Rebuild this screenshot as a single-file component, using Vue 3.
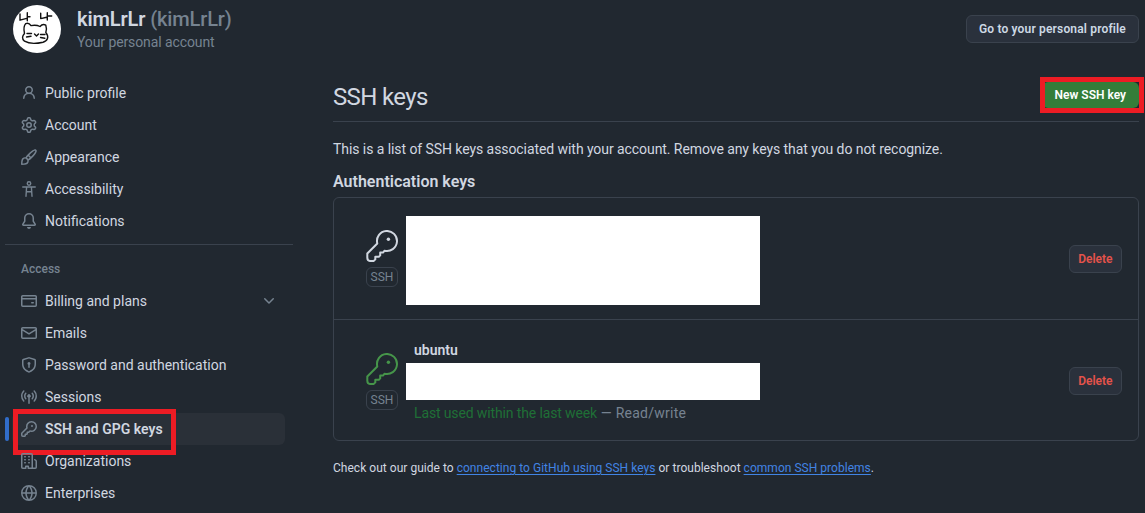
<script setup>
const icons = {
  person: 'M10.561 8.073a6.005 6.005 0 0 1 3.432 5.142.75.75 0 1 1-1.498.07 4.5 4.5 0 0 0-8.99 0 .75.75 0 1 1-1.498-.07 6.004 6.004 0 0 1 3.431-5.142 3.999 3.999 0 1 1 5.123 0ZM10.5 5a2.5 2.5 0 1 0-5 0 2.5 2.5 0 0 0 5 0Z',
  gear: 'M8 0a8.2 8.2 0 0 1 .701.031C9.444.095 9.99.645 10.16 1.29l.288 1.107c.018.066.079.158.212.224.231.114.454.243.668.386.123.082.233.09.299.071l1.103-.303c.644-.176 1.392.021 1.82.63.27.385.506.792.704 1.218.315.675.111 1.422-.364 1.891l-.814.806c-.049.048-.098.147-.088.294.016.257.016.515 0 .772-.01.147.038.246.088.294l.814.806c.475.469.679 1.216.364 1.891a7.977 7.977 0 0 1-.704 1.217c-.428.61-1.176.807-1.82.63l-1.102-.302c-.067-.019-.177-.011-.3.071a5.909 5.909 0 0 1-.668.386c-.133.066-.194.158-.211.224l-.29 1.106c-.168.646-.715 1.196-1.458 1.26a8.006 8.006 0 0 1-1.402 0c-.743-.064-1.289-.614-1.458-1.26l-.289-1.106c-.018-.066-.079-.158-.212-.224a5.738 5.738 0 0 1-.668-.386c-.123-.082-.233-.09-.299-.071l-1.103.303c-.644.176-1.392-.021-1.82-.63a8.12 8.12 0 0 1-.704-1.218c-.315-.675-.111-1.422.363-1.891l.815-.806c.05-.048.098-.147.088-.294a6.214 6.214 0 0 1 0-.772c.01-.147-.038-.246-.088-.294l-.815-.806C.635 6.045.431 5.298.746 4.623a7.92 7.92 0 0 1 .704-1.217c.428-.61 1.176-.807 1.82-.63l1.102.302c.067.019.177.011.3-.071.214-.143.437-.272.668-.386.133-.066.194-.158.211-.224l.29-1.106C6.009.645 6.556.095 7.299.03 7.53.01 7.764 0 8 0Zm-.571 1.525c-.036.003-.108.036-.137.146l-.289 1.105c-.147.561-.549.967-.998 1.189-.173.086-.34.183-.5.29-.417.278-.97.423-1.529.27l-1.103-.303c-.109-.03-.175.016-.195.045-.22.312-.412.644-.573.99-.014.031-.021.11.059.19l.815.806c.411.406.562.957.53 1.456a4.709 4.709 0 0 0 0 .582c.032.499-.119 1.05-.53 1.456l-.815.806c-.081.08-.073.159-.059.19.162.346.353.677.573.989.02.03.085.076.195.046l1.102-.303c.56-.153 1.113-.008 1.53.27.161.107.328.204.501.29.447.222.85.629.997 1.189l.289 1.105c.029.109.101.143.137.146a6.6 6.6 0 0 0 1.142 0c.036-.003.108-.036.137-.146l.289-1.105c.147-.561.549-.967.998-1.189.173-.086.34-.183.5-.29.417-.278.97-.423 1.529-.27l1.103.303c.109.029.175-.016.195-.045.22-.313.411-.644.573-.99.014-.031.021-.11-.059-.19l-.815-.806c-.411-.406-.562-.957-.53-1.456a4.709 4.709 0 0 0 0-.582c-.032-.499.119-1.05.53-1.456l.815-.806c.081-.08.073-.159.059-.19a6.464 6.464 0 0 0-.573-.989c-.02-.03-.085-.076-.195-.046l-1.102.303c-.56.153-1.113.008-1.53-.27a4.44 4.44 0 0 0-.501-.29c-.447-.222-.85-.629-.997-1.189l-.289-1.105c-.029-.11-.101-.143-.137-.146a6.6 6.6 0 0 0-1.142 0ZM11 8a3 3 0 1 1-6 0 3 3 0 0 1 6 0ZM9.5 8a1.5 1.5 0 1 0-3.001.001A1.5 1.5 0 0 0 9.5 8Z',
  brush: 'M11.134 1.535c.7-.509 1.416-.942 2.076-1.155.649-.21 1.463-.267 2.069.34.603.601.568 1.411.368 2.07-.202.668-.624 1.39-1.125 2.096-1.011 1.424-2.496 2.987-3.775 4.249-1.098 1.084-2.132 1.839-3.04 2.3a3.744 3.744 0 0 1-1.055 3.217c-.431.431-1.065.691-1.657.861-.614.177-1.294.287-1.914.357A21.151 21.151 0 0 1 .797 16H.743l.007-.75H.749L.742 16a.75.75 0 0 1-.743-.742l.748-.008-.749.007v-.054a21.25 21.25 0 0 1 .13-2.284c.067-.647.187-1.287.358-1.914.17-.591.43-1.226.86-1.657a3.746 3.746 0 0 1 3.227-1.054c.466-.893 1.225-1.907 2.314-2.982 1.271-1.255 2.833-2.75 4.245-3.777ZM1.62 13.089c-.051.464-.086.929-.104 1.395.466-.018.932-.053 1.396-.104a10.511 10.511 0 0 0 1.668-.309c.526-.151.856-.325 1.011-.48a2.25 2.25 0 1 0-3.182-3.182c-.155.155-.329.485-.48 1.01a10.515 10.515 0 0 0-.309 1.67Zm10.396-10.34c-1.224.89-2.605 2.189-3.822 3.384l1.718 1.718c1.21-1.205 2.51-2.597 3.387-3.833.47-.662.78-1.227.912-1.662.134-.444.032-.551.009-.575h-.001V1.78c-.014-.014-.113-.113-.548.027-.432.14-.995.462-1.655.942Zm-4.832 7.266-.001.001a9.859 9.859 0 0 0 1.63-1.142L7.155 7.216a9.7 9.7 0 0 0-1.161 1.607c.482.302.889.71 1.19 1.192Z',
  figure: 'M9.75 2.5a1.75 1.75 0 1 1-3.5 0 1.75 1.75 0 0 1 3.5 0ZM1.75 6H14.25M5.6 6 5 15.2M10.4 6 11 15.2M5.3 10.8H10.7',
  bell: 'M8 16a2 2 0 0 0 1.985-1.75c.017-.137-.097-.25-.235-.25h-3.5c-.138 0-.252.113-.235.25A2 2 0 0 0 8 16ZM3 5a5 5 0 0 1 10 0v2.947c0 .05.015.098.042.139l1.703 2.555A1.519 1.519 0 0 1 13.482 13H2.518a1.516 1.516 0 0 1-1.263-2.36l1.703-2.554A.255.255 0 0 0 3 7.947Zm5-3.5A3.5 3.5 0 0 0 4.5 5v2.947c0 .346-.102.683-.294.97l-1.703 2.556a.017.017 0 0 0-.003.01l.001.006c0 .002.002.004.004.006l.006.004.007.001h10.964l.007-.001.006-.004.004-.006.001-.007a.017.017 0 0 0-.003-.01l-1.703-2.554a1.745 1.745 0 0 1-.294-.97V5A3.5 3.5 0 0 0 8 1.5Z',
  card: 'M10.75 9a.75.75 0 0 0 0 1.5h1.5a.75.75 0 0 0 0-1.5h-1.5ZM0 3.75C0 2.784.784 2 1.75 2h12.5c.966 0 1.75.784 1.75 1.75v8.5A1.75 1.75 0 0 1 14.25 14H1.75A1.75 1.75 0 0 1 0 12.25ZM14.5 6.5h-13v5.75c0 .138.112.25.25.25h12.5a.25.25 0 0 0 .25-.25Zm0-2.75a.25.25 0 0 0-.25-.25H1.75a.25.25 0 0 0-.25.25V5h13Z',
  mail: 'M1.75 2h12.5c.966 0 1.75.784 1.75 1.75v8.5A1.75 1.75 0 0 1 14.25 14H1.75A1.75 1.75 0 0 1 0 12.25v-8.5C0 2.784.784 2 1.75 2ZM1.5 12.251c0 .138.112.25.25.25h12.5a.25.25 0 0 0 .25-.25V5.809L8.38 9.397a.75.75 0 0 1-.76 0L1.5 5.809v6.442Zm13-8.181v-.32a.25.25 0 0 0-.25-.25H1.75a.25.25 0 0 0-.25.25v.32L8 7.88Z',
  shield: 'm8.533.133 5.25 1.68A1.75 1.75 0 0 1 15 3.48V7c0 1.566-.32 3.182-1.303 4.682-.983 1.498-2.585 2.813-5.032 3.855a1.697 1.697 0 0 1-1.33 0c-2.447-1.042-4.049-2.357-5.032-3.855C1.32 10.182 1 8.566 1 7V3.48a1.75 1.75 0 0 1 1.217-1.667l5.25-1.68a1.748 1.748 0 0 1 1.066 0Zm-.61 1.429.001.001-5.25 1.68a.251.251 0 0 0-.174.237V7c0 1.36.275 2.666 1.057 3.859.784 1.194 2.121 2.342 4.366 3.298a.196.196 0 0 0 .154 0c2.245-.957 3.582-2.103 4.366-3.297C13.225 9.666 13.5 8.358 13.5 7V3.48a.25.25 0 0 0-.174-.238l-5.25-1.68a.25.25 0 0 0-.153 0ZM9.5 6.5c0 .536-.286 1.032-.75 1.3v2.45a.75.75 0 0 1-1.5 0V7.8A1.5 1.5 0 1 1 9.5 6.5Z',
  broadcast: 'M8.75 8.582v5.668a.75.75 0 0 1-1.5 0V8.582a1.75 1.75 0 1 1 1.5 0Zm3.983-7.125a.75.75 0 0 1 1.06.026A7.976 7.976 0 0 1 16 7c0 2.139-.84 4.083-2.207 5.517a.75.75 0 1 1-1.086-1.034A6.474 6.474 0 0 0 14.5 7a6.474 6.474 0 0 0-1.793-4.483.75.75 0 0 1 .026-1.06Zm-9.466 0a.75.75 0 0 1 .026 1.06A6.474 6.474 0 0 0 1.5 7a6.47 6.47 0 0 0 1.793 4.483.75.75 0 0 1-1.086 1.034A7.973 7.973 0 0 1 0 7c0-2.139.84-4.083 2.207-5.517a.75.75 0 0 1 1.06-.026Zm8.556 2.321A4.988 4.988 0 0 1 13 7a4.988 4.988 0 0 1-1.177 3.222.75.75 0 1 1-1.146-.967A3.487 3.487 0 0 0 11.5 7c0-.86-.309-1.645-.823-2.255a.75.75 0 0 1 1.146-.967Zm-6.492.958A3.48 3.48 0 0 0 4.5 7a3.48 3.48 0 0 0 .823 2.255.75.75 0 0 1-1.146.967A4.981 4.981 0 0 1 3 7a4.982 4.982 0 0 1 1.188-3.236.75.75 0 1 1 1.143.972Z',
  key: 'M10.5 0a5.499 5.499 0 1 1-1.288 10.848l-.932.932a.749.749 0 0 1-.53.22H7v.75a.749.749 0 0 1-.22.53l-.5.5a.749.749 0 0 1-.53.22H5v.75a.749.749 0 0 1-.22.53l-.5.5a.749.749 0 0 1-.53.22h-2A1.75 1.75 0 0 1 0 14.25v-2c0-.199.079-.389.22-.53l4.932-4.932A5.5 5.5 0 0 1 10.5 0Zm-4 5.5c-.001.431.069.86.205 1.269a.75.75 0 0 1-.181.768L1.5 12.56v1.69c0 .138.112.25.25.25h1.69l.06-.06v-1.19a.75.75 0 0 1 .75-.75h1.19l.06-.06v-1.19a.75.75 0 0 1 .75-.75h1.19l1.023-1.025a.75.75 0 0 1 .768-.18A4 4 0 1 0 6.5 5.5ZM11 6a1 1 0 1 1 0-2 1 1 0 0 1 0 2Z',
  org: 'M1.75 16A1.75 1.75 0 0 1 0 14.25V1.75C0 .784.784 0 1.75 0h8.5C11.216 0 12 .784 12 1.75v12.5c0 .085-.006.168-.018.25h2.268a.25.25 0 0 0 .25-.25V8.285a.25.25 0 0 0-.111-.208l-1.055-.703a.749.749 0 1 1 .832-1.248l1.055.703c.487.325.779.871.779 1.456v5.965A1.75 1.75 0 0 1 14.25 16h-3.5a.766.766 0 0 1-.197-.026c-.099.017-.2.026-.303.026h-3a.75.75 0 0 1-.75-.75V14h-1v1.25a.75.75 0 0 1-.75.75Zm-.25-1.75c0 .138.112.25.25.25H4v-1.25a.75.75 0 0 1 .75-.75h2.5a.75.75 0 0 1 .75.75v1.25h2.25a.25.25 0 0 0 .25-.25V1.75a.25.25 0 0 0-.25-.25h-8.5a.25.25 0 0 0-.25.25ZM3.75 6h.5a.75.75 0 0 1 0 1.5h-.5a.75.75 0 0 1 0-1.5ZM3 3.75A.75.75 0 0 1 3.75 3h.5a.75.75 0 0 1 0 1.5h-.5A.75.75 0 0 1 3 3.75Zm4 3A.75.75 0 0 1 7.75 6h.5a.75.75 0 0 1 0 1.5h-.5A.75.75 0 0 1 7 6.75ZM7.75 3h.5a.75.75 0 0 1 0 1.5h-.5a.75.75 0 0 1 0-1.5ZM3 9.75A.75.75 0 0 1 3.75 9h.5a.75.75 0 0 1 0 1.5h-.5A.75.75 0 0 1 3 9.75ZM7.75 9h.5a.75.75 0 0 1 0 1.5h-.5a.75.75 0 0 1 0-1.5Z',
  globe: 'M8 0a8 8 0 1 1 0 16A8 8 0 0 1 8 0ZM5.78 8.75a9.64 9.64 0 0 0 1.363 4.177c.255.426.542.832.857 1.215.245-.296.551-.705.857-1.215A9.64 9.64 0 0 0 10.22 8.75Zm4.44-1.5a9.64 9.64 0 0 0-1.363-4.177c-.307-.51-.612-.919-.857-1.215a9.927 9.927 0 0 0-.857 1.215A9.64 9.64 0 0 0 5.78 7.25Zm-5.944 1.5H1.543a6.507 6.507 0 0 0 4.666 5.5c-.123-.181-.24-.365-.352-.552-.715-1.192-1.437-2.874-1.581-4.948Zm-2.733-1.5h2.733c.144-2.074.866-3.756 1.58-4.948.12-.197.237-.381.353-.552a6.507 6.507 0 0 0-4.666 5.5Zm10.181 1.5c-.144 2.074-.866 3.756-1.58 4.948-.12.197-.237.381-.353.552a6.507 6.507 0 0 0 4.666-5.5Zm2.733-1.5a6.507 6.507 0 0 0-4.666-5.5c.123.181.24.365.353.552.714 1.192 1.436 2.874 1.58 4.948Z',
}

const chevron = 'M12.78 5.22a.749.749 0 0 1 0 1.06l-4.25 4.25a.749.749 0 0 1-1.06 0L3.22 6.28a.749.749 0 1 1 1.06-1.06L8 8.939l3.72-3.719a.749.749 0 0 1 1.06 0Z'

const topNav = [
  { label: 'Public profile', icon: 'person' },
  { label: 'Account', icon: 'gear' },
  { label: 'Appearance', icon: 'brush' },
  { label: 'Accessibility', icon: 'figure', outline: true },
  { label: 'Notifications', icon: 'bell' },
]

const accessNav = [
  { label: 'Billing and plans', icon: 'card', more: true },
  { label: 'Emails', icon: 'mail' },
  { label: 'Password and authentication', icon: 'shield' },
  { label: 'Sessions', icon: 'broadcast' },
  { label: 'SSH and GPG keys', icon: 'key', active: true },
  { label: 'Organizations', icon: 'org' },
  { label: 'Enterprises', icon: 'globe' },
]

const keys = [
  { id: 1, used: false },
  { id: 2, used: true, name: 'ubuntu' },
]
</script>

<template>
  <div class="page">
    <header class="top">
      <svg class="avatar" viewBox="0 0 48 48" width="48" height="48">
        <circle cx="24" cy="24" r="24" fill="#fff" />
        <g fill="none" stroke="#111" stroke-width="1.4" stroke-linecap="round" stroke-linejoin="round">
          <path d="M7 9V15.2L13.7 13.3M14.3 7.7V15.7M14.3 11.7H17" />
          <path d="M27.7 8.3V13.6L33.7 12.3M34.3 7.7V15M34.3 11H38.7" />
          <path d="M11.5 28.5C10.5 24 11 20.5 12.8 18.6 14.8 17.8 16.8 18.8 18 20.6 21 20 24.5 20.2 27 21.5 28.5 19.8 31 19.2 32.8 20.2 33.8 23 33.5 25.5 32.8 27.5 36.5 32 34.5 36 30 37.2 24 38.6 16 38.8 11.5 36.2 8.5 33.6 9.3 30.8 11.5 28.5Z" />
          <path d="M14 28.5H18.5M13.5 32 18 31.3M21.5 29 23.5 31 25.5 29M27.5 29.5H32M27.5 32.5 31.8 33.3" />
        </g>
      </svg>
      <div class="who">
        <div class="who-name">kimLrLr <span class="who-handle">(kimLrLr)</span></div>
        <div class="who-sub">Your personal account</div>
      </div>
      <a class="btn profile-btn">Go to your personal profile</a>
    </header>

    <div class="columns">
      <aside class="side">
        <nav class="nav">
          <a v-for="item in topNav" :key="item.label" class="nav-item">
            <svg class="nav-icon" :class="{ outline: item.outline }" viewBox="0 0 16 16" width="16" height="16">
              <path :d="icons[item.icon]" />
            </svg>
            <span>{{ item.label }}</span>
          </a>
        </nav>
        <div class="side-rule"></div>
        <div class="side-head">Access</div>
        <nav class="nav">
          <a
            v-for="item in accessNav"
            :key="item.label"
            class="nav-item"
            :class="{ active: item.active }"
          >
            <svg class="nav-icon" viewBox="0 0 16 16" width="16" height="16">
              <path :d="icons[item.icon]" />
            </svg>
            <span>{{ item.label }}</span>
            <svg v-if="item.more" class="nav-icon chevron" viewBox="0 0 16 16" width="16" height="16">
              <path :d="chevron" />
            </svg>
            <i v-if="item.active" class="marker"></i>
            <i v-if="item.active" class="mark-side"></i>
          </a>
        </nav>
      </aside>

      <main class="main">
        <div class="title-row">
          <h2>SSH keys</h2>
          <a class="btn new-btn">New SSH key<i class="mark-new"></i></a>
        </div>
        <p class="intro">This is a list of SSH keys associated with your account. Remove any keys that you do not recognize.</p>
        <h3>Authentication keys</h3>
        <div class="key-box">
          <div v-for="k in keys" :key="k.id" class="key-row">
            <div class="key-badge" :class="{ used: k.used }">
              <svg viewBox="0 0 32 32" width="32" height="32">
                <path
                  class="key-line"
                  d="M11.3 13.45 1.3 23.5V27.5C1.3 29.6 2.2 30.9 3.8 30.9H7.8L9.3 29.4V26.8H12.8L14.2 25.4V22.6H17L18.6 20.7A10 10 0 1 0 11.3 13.45Z"
                />
                <circle class="key-dot" cx="22.4" cy="9.3" r="1.7" />
              </svg>
              <span class="ssh">SSH</span>
            </div>
            <div class="key-info">
              <strong v-if="k.name">{{ k.name }}</strong>
              <div class="redacted" :class="{ tall: !k.used }"></div>
              <div v-if="k.used" class="key-meta"><span class="recent">Last used within the last week</span> — Read/write</div>
            </div>
            <a class="btn del-btn">Delete</a>
          </div>
        </div>
        <p class="foot">
          Check out our guide to <a>connecting to GitHub using SSH keys</a> or troubleshoot <a>common SSH problems</a>.
        </p>
      </main>
    </div>
  </div>
</template>

<style>
html, body {
  background: #212830;
  overflow: hidden;
}
</style>

<style scoped>
.page {
  height: 513px;
  box-sizing: border-box;
  padding: 5px 6px 0 5px;
  background: #212830;
  color: #d1d7e0;
  font-family: Roboto, "Liberation Sans", sans-serif;
  font-size: 14px;
}
.top {
  display: flex;
  align-items: center;
  height: 48px;
  padding-left: 8px;
}
.avatar {
  flex: none;
  margin-right: 16px;
}
.who {
  flex: 1;
}
.who-name {
  font-size: 20px;
  font-weight: 600;
  line-height: 28px;
  margin-top: -2px;
  letter-spacing: -0.12px;
}
.who-handle {
  font-weight: 500;
  color: #768390;
}
.who-sub {
  color: #768390;
  line-height: 18px;
  letter-spacing: -0.1px;
}
.btn {
  display: inline-flex;
  align-items: center;
  box-sizing: border-box;
  border-radius: 6px;
  font-size: 12px;
  font-weight: 600;
  white-space: nowrap;
}
.profile-btn {
  height: 28px;
  padding: 0 12px;
  background: #2a313c;
  border: 1px solid #3a424d;
  color: #cdd9e5;
  letter-spacing: 0.16px;
}
.columns {
  display: flex;
  margin-top: 24px;
}
.side {
  flex: none;
  width: 288px;
}
.nav {
  display: flex;
  flex-direction: column;
  padding: 0 8px 0 7px;
}
.nav-item {
  position: relative;
  display: flex;
  align-items: center;
  gap: 8px;
  height: 32px;
  padding: 0 8px 0 9px;
  border-radius: 6px;
  color: #d1d7e0;
}
.nav-icon {
  flex: none;
  fill: #768390;
}
.nav-icon.outline {
  fill: none;
  stroke: #768390;
  stroke-width: 1.4;
  stroke-linecap: round;
}
.chevron {
  margin-left: auto;
}
.nav-item.active {
  background: #2a3038;
  font-weight: 600;
}
.marker {
  position: absolute;
  left: -7px;
  top: 4px;
  width: 4px;
  height: 24px;
  border-radius: 6px;
  background: #316dca;
}
.mark-side {
  position: absolute;
  left: 1px;
  top: -4px;
  width: 163px;
  height: 46px;
  box-sizing: border-box;
  border: 5px solid #ed1c24;
}
.side-rule {
  height: 1px;
  margin-top: 7px;
  background: #3a424d;
}
.side-head {
  height: 40px;
  display: flex;
  align-items: center;
  padding: 8px 0 0 16px;
  box-sizing: border-box;
  font-size: 12px;
  font-weight: 500;
  color: #768390;
}
.main {
  flex: 1;
  min-width: 0;
  margin-left: 40px;
}
.title-row {
  display: flex;
  align-items: center;
  justify-content: space-between;
  height: 45px;
  padding-bottom: 8px;
  box-sizing: border-box;
  border-bottom: 1px solid #3a424d;
}
h2 {
  margin: 4px 0 0;
  font-size: 24px;
  font-weight: 400;
  line-height: 32px;
  letter-spacing: -0.65px;
  color: #d1d7e0;
}
.new-btn {
  position: relative;
  height: 26px;
  padding: 0 13px;
  background: #347d39;
  color: #fff;
}
.mark-new {
  position: absolute;
  left: -2px;
  right: -5px;
  top: -5px;
  bottom: -5px;
  border: 5px solid #ed1c24;
}
.intro {
  margin: 17px 0 0;
  line-height: 21px;
  letter-spacing: -0.07px;
}
h3 {
  margin: 10px 0 3px;
  font-size: 16px;
  font-weight: 600;
  line-height: 24px;
  color: #d1d7e0;
}
.key-box {
  border: 1px solid #3a424d;
  border-radius: 6px;
}
.key-row {
  display: flex;
  align-items: center;
  height: 121px;
  padding: 0 16px 0 32px;
}
.key-row + .key-row {
  border-top: 1px solid #3a424d;
  height: 121px;
  box-sizing: border-box;
}
.key-row + .key-row .key-badge,
.key-row + .key-row .del-btn {
  margin-top: 2px;
}
.key-badge {
  flex: none;
  display: flex;
  flex-direction: column;
  align-items: center;
  width: 32px;
  margin-right: 8px;
}
.key-badge svg {
  display: block;
  margin-bottom: 5px;
}
.key-line {
  fill: none;
  stroke: #d1d7e0;
  stroke-width: 2;
  stroke-linejoin: round;
}
.key-dot {
  fill: #d1d7e0;
}
.used .key-line {
  stroke: #46954a;
}
.used .key-dot {
  fill: #46954a;
}
.ssh {
  box-sizing: border-box;
  width: 32px;
  height: 20px;
  line-height: 18px;
  text-align: center;
  border: 1px solid #3a424d;
  border-radius: 6px;
  font-size: 12px;
  color: #768390;
}
.key-info {
  flex: 1;
  padding-top: 3px;
}
.key-info strong {
  display: block;
  padding-left: 8px;
  font-size: 14px;
  font-weight: 600;
  line-height: 20px;
  margin-bottom: 3px;
}
.redacted {
  width: 354px;
  height: 37px;
  background: #fff;
}
.redacted.tall {
  height: 89px;
}
.key-meta {
  padding-left: 8px;
  margin-top: 3px;
  line-height: 20px;
  color: #768390;
  letter-spacing: 0.25px;
}
.recent {
  color: #1f6f36;
  letter-spacing: -0.13px;
}
.del-btn {
  height: 28px;
  padding: 0 8.5px;
  background: #2a313c;
  border: 1px solid #3a424d;
  color: #e5534b;
}
.foot {
  margin: 17px 0 0;
  font-size: 12px;
  line-height: 20px;
  letter-spacing: 0.03px;
}
.foot a {
  color: #4184e4;
  text-decoration: underline;
  text-underline-offset: 2px;
}
</style>
